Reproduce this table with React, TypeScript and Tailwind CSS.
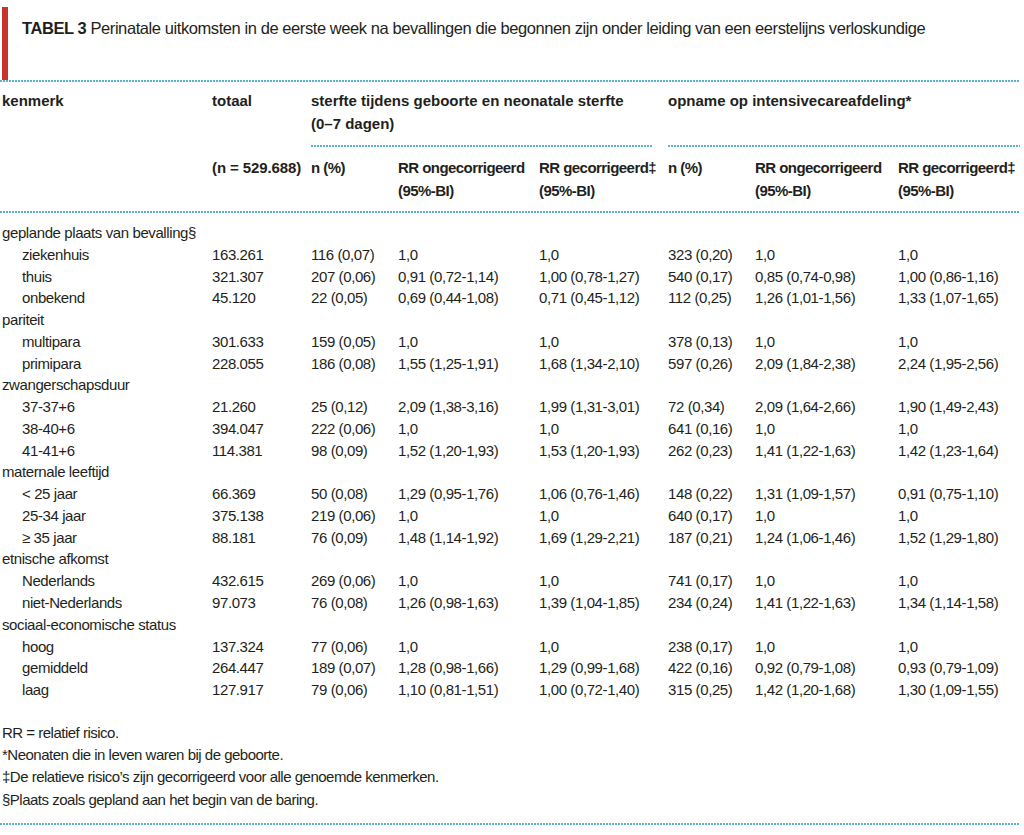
import React from "react";

type Row = string[];
type Group = { label: string; rows: Row[] };

const groups: Group[] = [
  {
    label: "geplande plaats van bevalling§",
    rows: [
      ["ziekenhuis", "163.261", "116 (0,07)", "1,0", "1,0", "323 (0,20)", "1,0", "1,0"],
      ["thuis", "321.307", "207 (0,06)", "0,91 (0,72-1,14)", "1,00 (0,78-1,27)", "540 (0,17)", "0,85 (0,74-0,98)", "1,00 (0,86-1,16)"],
      ["onbekend", "45.120", "22 (0,05)", "0,69 (0,44-1,08)", "0,71 (0,45-1,12)", "112 (0,25)", "1,26 (1,01-1,56)", "1,33 (1,07-1,65)"],
    ],
  },
  {
    label: "pariteit",
    rows: [
      ["multipara", "301.633", "159 (0,05)", "1,0", "1,0", "378 (0,13)", "1,0", "1,0"],
      ["primipara", "228.055", "186 (0,08)", "1,55 (1,25-1,91)", "1,68 (1,34-2,10)", "597 (0,26)", "2,09 (1,84-2,38)", "2,24 (1,95-2,56)"],
    ],
  },
  {
    label: "zwangerschapsduur",
    rows: [
      ["37-37+6", "21.260", "25 (0,12)", "2,09 (1,38-3,16)", "1,99 (1,31-3,01)", "72 (0,34)", "2,09 (1,64-2,66)", "1,90 (1,49-2,43)"],
      ["38-40+6", "394.047", "222 (0,06)", "1,0", "1,0", "641 (0,16)", "1,0", "1,0"],
      ["41-41+6", "114.381", "98 (0,09)", "1,52 (1,20-1,93)", "1,53 (1,20-1,93)", "262 (0,23)", "1,41 (1,22-1,63)", "1,42 (1,23-1,64)"],
    ],
  },
  {
    label: "maternale leeftijd",
    rows: [
      ["< 25 jaar", "66.369", "50 (0,08)", "1,29 (0,95-1,76)", "1,06 (0,76-1,46)", "148 (0,22)", "1,31 (1,09-1,57)", "0,91 (0,75-1,10)"],
      ["25-34 jaar", "375.138", "219 (0,06)", "1,0", "1,0", "640 (0,17)", "1,0", "1,0"],
      ["≥ 35 jaar", "88.181", "76 (0,09)", "1,48 (1,14-1,92)", "1,69 (1,29-2,21)", "187 (0,21)", "1,24 (1,06-1,46)", "1,52 (1,29-1,80)"],
    ],
  },
  {
    label: "etnische afkomst",
    rows: [
      ["Nederlands", "432.615", "269 (0,06)", "1,0", "1,0", "741 (0,17)", "1,0", "1,0"],
      ["niet-Nederlands", "97.073", "76 (0,08)", "1,26 (0,98-1,63)", "1,39 (1,04-1,85)", "234 (0,24)", "1,41 (1,22-1,63)", "1,34 (1,14-1,58)"],
    ],
  },
  {
    label: "sociaal-economische status",
    rows: [
      ["hoog", "137.324", "77 (0,06)", "1,0", "1,0", "238 (0,17)", "1,0", "1,0"],
      ["gemiddeld", "264.447", "189 (0,07)", "1,28 (0,98-1,66)", "1,29 (0,99-1,68)", "422 (0,16)", "0,92 (0,79-1,08)", "0,93 (0,79-1,09)"],
      ["laag", "127.917", "79 (0,06)", "1,10 (0,81-1,51)", "1,00 (0,72-1,40)", "315 (0,25)", "1,42 (1,20-1,68)", "1,30 (1,09-1,55)"],
    ],
  },
];

const cols = "grid grid-cols-[210px_99px_87px_141px_129px_87px_143px_1fr] whitespace-nowrap";

const Dots = ({ className = "" }: { className?: string }) => (
  <div
    className={
      "h-[2px] bg-[linear-gradient(to_right,#58b3cf_55%,transparent_55%)] bg-[length:3px_2px] bg-repeat-x " +
      className
    }
  />
);

const App = () => {
  return (
    <div className="w-[1020px] bg-white text-[#231f20] font-['Liberation_Sans',Arial,sans-serif] text-[15px] tracking-[-0.4px]">
      <div className="flex h-[80px]">
        <div className="ml-[2px] mt-[7px] h-[73px] w-[6px] shrink-0 bg-[#c8322f]"></div>
        <p className="ml-[14px] mt-[17px] text-[16.5px] tracking-[-0.42px] leading-[22px] whitespace-nowrap">
          <span className="font-bold">TABEL 3</span> Perinatale uitkomsten in de eerste week na bevallingen die
          begonnen zijn onder leiding van een eerstelijns verloskundige
        </p>
      </div>
      <Dots />

      <div className={cols + " pl-[2px] pt-[7px] font-bold tracking-[0px] leading-[23px]"}>
        <p>kenmerk</p>
        <p>totaal</p>
        <p className="col-span-3">
          sterfte tijdens geboorte en neonatale sterfte
          <br />
          (0–7 dagen)
        </p>
        <p className="col-span-3">opname op intensivecareafdeling*</p>
      </div>
      <div className={cols + " pl-[2px] mt-[10px]"}>
        <div className="col-span-2"></div>
        <Dots className="col-span-3 mr-[16px]" />
        <Dots className="col-span-3" />
      </div>
      <div className={cols + " pl-[2px] pt-[9px] font-bold tracking-[-0.55px] leading-[23px]"}>
        <p></p>
        <p className="tracking-[-0.1px]">(n = 529.688)</p>
        <p>n (%)</p>
        <p>
          RR ongecorrigeerd
          <br />
          (95%-BI)
        </p>
        <p>
          RR gecorrigeerd‡
          <br />
          (95%-BI)
        </p>
        <p>n (%)</p>
        <p>
          RR ongecorrigeerd
          <br />
          (95%-BI)
        </p>
        <p>
          RR gecorrigeerd‡
          <br />
          (95%-BI)
        </p>
      </div>
      <Dots className="mt-[9px]" />

      <div className="pt-[9px] leading-[21.76px]">
        {groups.map((g) => (
          <div key={g.label}>
            <p className="pl-[2px]">{g.label}</p>
            {g.rows.map((r) => (
              <div key={r[0]} className={cols + " pl-[2px]"}>
                {r.map((c, i) => (
                  <p key={i} className={i === 0 ? "pl-[20px]" : ""}>
                    {c}
                  </p>
                ))}
              </div>
            ))}
          </div>
        ))}
      </div>

      <div className="mt-[21px] pl-[2px] tracking-[-0.5px] leading-[22.3px]">
        <p>RR = relatief risico.</p>
        <p>*Neonaten die in leven waren bij de geboorte.</p>
        <p>‡De relatieve risico’s zijn gecorrigeerd voor alle genoemde kenmerken.</p>
        <p>§Plaats zoals gepland aan het begin van de baring.</p>
      </div>
      <Dots className="mt-[12px]" />
    </div>
  );
};

export default App;
